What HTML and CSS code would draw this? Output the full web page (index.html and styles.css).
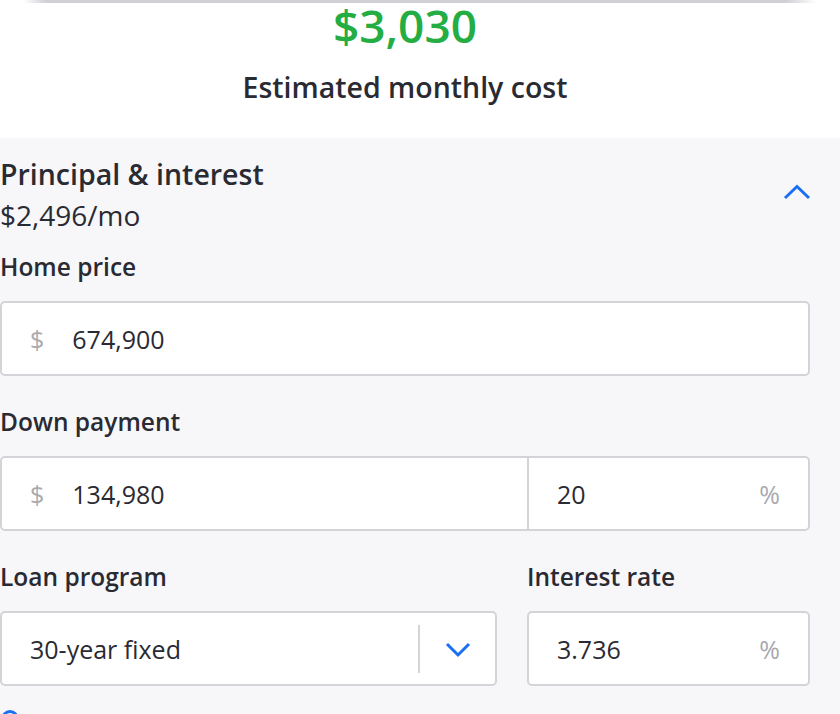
FILE: index.html
```html
<!DOCTYPE html>
<html lang="en">
<head>
    <meta charset="UTF-8">
    <meta name="viewport" content="width=device-width, initial-scale=1.0">
    <title>Monthly cost</title>
    <link rel="stylesheet" href="styles.css">
</head>
<body>
    <div class="summary">
        <div class="edge"></div>
        <div class="wrap">
            <div class="total">$3,030</div>
            <div class="caption">Estimated monthly cost</div>
        </div>
    </div>

    <div class="wrap details">
        <div class="section-head">
            <div>
                <div class="section-title">Principal &amp; interest</div>
                <div class="section-sub">$2,496/mo</div>
            </div>
            <svg class="chev-up" width="28" height="16" viewBox="0 0 28 16">
                <polyline points="2,14 14,2.5 26,14" fill="none" stroke="#1a6ff4" stroke-width="3"/>
            </svg>
        </div>

        <div class="field first">
            <div class="label">Home price</div>
            <div class="box">
                <span class="unit">$</span>
                <span class="value">674,900</span>
            </div>
        </div>

        <div class="field">
            <div class="label">Down payment</div>
            <div class="box split">
                <div class="part">
                    <span class="unit">$</span>
                    <span class="value">134,980</span>
                </div>
                <div class="part pct">
                    <span class="value">20</span>
                    <span class="unit">%</span>
                </div>
            </div>
        </div>

        <div class="row">
            <div class="field">
                <div class="label">Loan program</div>
                <div class="box select">
                    <span class="value">30-year fixed</span>
                    <div class="arrow">
                        <svg width="26" height="16" viewBox="0 0 26 16">
                            <polyline points="2,2 13,13 24,2" fill="none" stroke="#1a6ff4" stroke-width="3"/>
                        </svg>
                    </div>
                </div>
            </div>
            <div class="field">
                <div class="label">Interest rate</div>
                <div class="box pct">
                    <span class="value">3.736</span>
                    <span class="unit">%</span>
                </div>
            </div>
        </div>

        <svg class="more-icon" width="18" height="18" viewBox="0 0 18 18">
            <circle cx="9" cy="9" r="7.5" fill="none" stroke="#1a6ff4" stroke-width="3"/>
        </svg>
    </div>
</body>
</html>
```

FILE: styles.css
```css
*{
    margin: 0;
    padding: 0;
    box-sizing: border-box;
}
body{
    background: #f7f7f9;
    font-family: "Open Sans", "Noto Sans", sans-serif;
    color: #2a2a33;
    overflow: hidden;
}
.wrap{
    width: 810px;
}
.summary{
    background: #fff;
    height: 138px;
}
.edge{
    height: 3px;
    margin: 0 24px 0 24px;
    background: linear-gradient(90deg, rgba(208,208,213,0) 0, #d0d0d5 22px, #d0d0d5 calc(100% - 30px), rgba(208,208,213,0) 100%);
}
.total{
    text-align: center;
    font-size: 46px;
    font-weight: 600;
    line-height: 50px;
    margin-top: -3px;
    color: #23ad43;
}
.caption{
    text-align: center;
    font-size: 28.5px;
    font-weight: 600;
    line-height: 36px;
    margin-top: 19px;
}
.details{
    padding-top: 17px;
}
.section-head{
    display: flex;
    justify-content: space-between;
    align-items: center;
}
.section-title{
    font-size: 28.5px;
    font-weight: 600;
    line-height: 38px;
}
.section-sub{
    font-size: 28px;
    line-height: 44px;
}
.chev-up{
    margin-bottom: 8px;
    margin-right: -1px;
}
.field{
    margin-top: 30px;
}
.field.first{
    margin-top: 14px;
}
.label{
    font-size: 24.5px;
    font-weight: 600;
    line-height: 32px;
    margin-bottom: 18px;
}
.box{
    height: 75px;
    background: #fff;
    border: 2px solid #d4d4d8;
    border-radius: 5px;
    display: flex;
    align-items: center;
    padding: 0 28px;
    font-size: 25px;
    line-height: 34px;
}
.unit{
    color: #a9a9ae;
}
.box .unit + .value{
    margin-left: 28px;
}
.box.split{
    display: grid;
    grid-template-columns: 1fr 281px;
    padding: 0;
}
.part{
    display: flex;
    align-items: center;
    height: 100%;
    padding: 0 28px;
}
.part.pct{
    border-left: 2px solid #d4d4d8;
}
.pct{
    justify-content: space-between;
}
.row{
    display: grid;
    grid-template-columns: minmax(0, 1fr) 283px;
    column-gap: 30px;
}
.box.select{
    padding-right: 0;
    justify-content: space-between;
}
.arrow{
    width: 77px;
    height: 48px;
    border-left: 2px solid #d4d4d8;
    display: flex;
    align-items: center;
    justify-content: center;
}
.arrow svg{
    margin-top: 2px;
}
.more-icon{
    display: block;
    margin-top: 24px;
    margin-left: 1px;
}
```
